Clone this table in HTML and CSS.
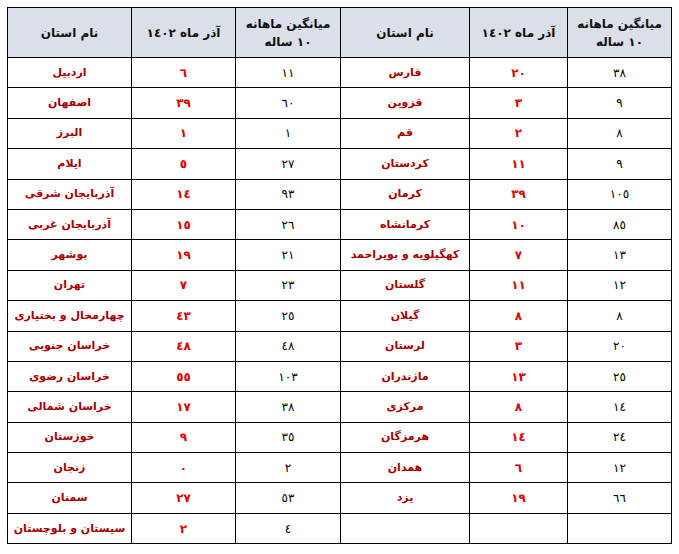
FILE: index.html
```html
<!DOCTYPE html>
<html lang="fa">
<head>
<meta charset="utf-8">
<link rel="stylesheet" href="styles.css">
</head>
<body>
<div class="wrap">
<table class="stats" dir="rtl">
<colgroup>
<col class="c1"><col class="c2"><col class="c3"><col class="c4"><col class="c5"><col class="c6">
</colgroup>
<thead>
<tr>
<th>میانگین ماهانه<br>١٠ ساله</th><th>آذر ماه ١٤٠٢</th><th>نام استان</th>
<th>میانگین ماهانه<br>١٠ ساله</th><th>آذر ماه ١٤٠٢</th><th>نام استان</th>
</tr>
</thead>
<tbody>
<tr><td class="avg">٣٨</td><td class="num">٢٠</td><td class="name">فارس</td><td class="avg">١١</td><td class="num">٦</td><td class="name">اردبیل</td></tr>
<tr><td class="avg">٩</td><td class="num">٣</td><td class="name">قزوین</td><td class="avg">٦٠</td><td class="num">٣٩</td><td class="name">اصفهان</td></tr>
<tr><td class="avg">٨</td><td class="num">٢</td><td class="name">قم</td><td class="avg">١</td><td class="num">١</td><td class="name">البرز</td></tr>
<tr><td class="avg">٩</td><td class="num">١١</td><td class="name">کردستان</td><td class="avg">٢٧</td><td class="num">٥</td><td class="name">ایلام</td></tr>
<tr><td class="avg">١٠٥</td><td class="num">٣٩</td><td class="name">کرمان</td><td class="avg">٩٣</td><td class="num">١٤</td><td class="name">آذربایجان شرقی</td></tr>
<tr><td class="avg">٨٥</td><td class="num">١٠</td><td class="name">کرمانشاه</td><td class="avg">٢٦</td><td class="num">١٥</td><td class="name">آذربایجان غربی</td></tr>
<tr><td class="avg">١٣</td><td class="num">٧</td><td class="name">کهگیلویه و بویراحمد</td><td class="avg">٢١</td><td class="num">١٩</td><td class="name">بوشهر</td></tr>
<tr><td class="avg">١٢</td><td class="num">١١</td><td class="name">گلستان</td><td class="avg">٢٣</td><td class="num">٧</td><td class="name">تهران</td></tr>
<tr><td class="avg">٨</td><td class="num">٨</td><td class="name">گیلان</td><td class="avg">٢٥</td><td class="num">٤٣</td><td class="name">چهارمحال و بختیاری</td></tr>
<tr><td class="avg">٢٠</td><td class="num">٣</td><td class="name">لرستان</td><td class="avg">٤٨</td><td class="num">٤٨</td><td class="name">خراسان جنوبی</td></tr>
<tr><td class="avg">٢٥</td><td class="num">١٣</td><td class="name">مازندران</td><td class="avg">١٠٣</td><td class="num">٥٥</td><td class="name">خراسان رضوی</td></tr>
<tr><td class="avg">١٤</td><td class="num">٨</td><td class="name">مرکزی</td><td class="avg">٣٨</td><td class="num">١٧</td><td class="name">خراسان شمالی</td></tr>
<tr><td class="avg">٢٤</td><td class="num">١٤</td><td class="name">هرمزگان</td><td class="avg">٣٥</td><td class="num">٩</td><td class="name">خوزستان</td></tr>
<tr><td class="avg">١٢</td><td class="num">٦</td><td class="name">همدان</td><td class="avg">٢</td><td class="num">٠</td><td class="name">زنجان</td></tr>
<tr><td class="avg">٦٦</td><td class="num">١٩</td><td class="name">یزد</td><td class="avg">٥٣</td><td class="num">٢٧</td><td class="name">سمنان</td></tr>
<tr><td class="avg"></td><td class="num"></td><td class="name"></td><td class="avg">٤</td><td class="num">٢</td><td class="name">سیستان و بلوچستان</td></tr>
</tbody>
</table>
</div>
</body>
</html>
```

FILE: styles.css
```css
html, body {
  margin: 0;
  padding: 0;
  background: #ffffff;
}
.wrap {
  padding: 7px 0 0 7px;
}
.stats {
  border-collapse: collapse;
  table-layout: fixed;
  width: 664px;
  font-family: "DejaVu Sans", "Noto Sans", sans-serif;
}
.c1 { width: 104px; }
.c2 { width: 98px; }
.c3 { width: 129px; }
.c4 { width: 105px; }
.c5 { width: 104px; }
.c6 { width: 124px; }
.stats th,
.stats td {
  border: 1px solid #000;
  text-align: center;
  vertical-align: middle;
  padding: 0 2px;
  white-space: nowrap;
}
.stats thead tr {
  height: 50px;
}
.stats th {
  background: #dbdfe7;
  color: #111;
  font-weight: bold;
  font-size: 12px;
  line-height: 18px;
}
.stats tbody tr {
  height: 30.4px;
}
.stats td {
  font-size: 11px;
  line-height: 14px;
}
.stats td.avg {
  color: #000;
  font-weight: normal;
  font-size: 12px;
}
.stats td.num {
  color: #e00000;
  font-weight: bold;
  font-size: 12px;
}
.stats td.name {
  color: #a50000;
  font-weight: bold;
}
```
